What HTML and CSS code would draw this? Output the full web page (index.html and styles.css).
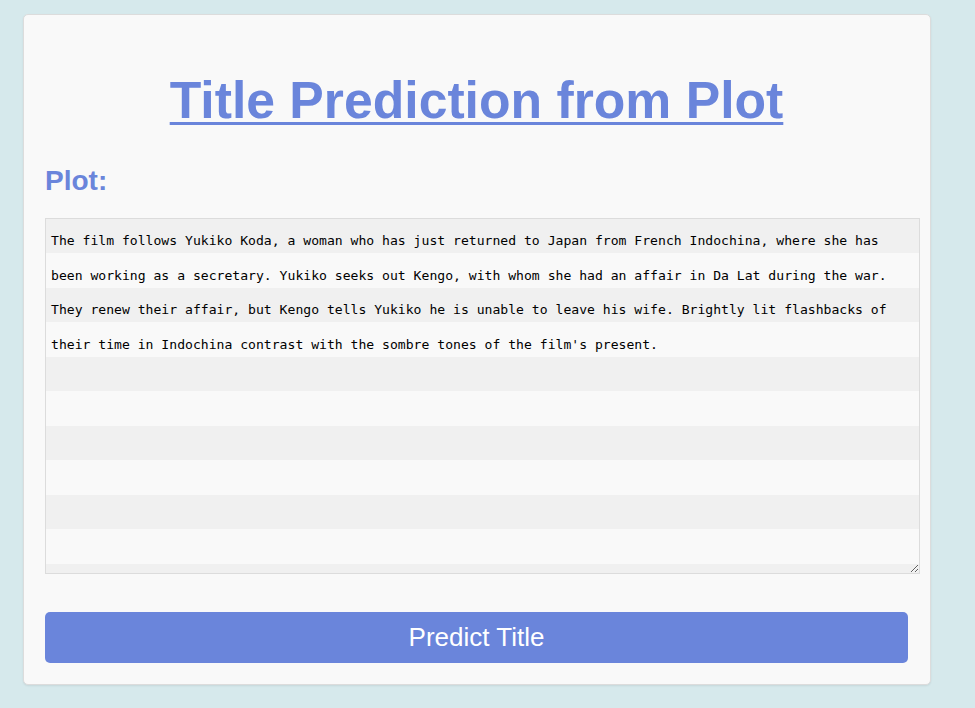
FILE: index.html
```html
<!DOCTYPE html>
<html lang="en">
<head>
<meta charset="utf-8">
<title>Title Prediction from Plot</title>
<link rel="stylesheet" href="styles.css">
</head>
<body>
<div class="card">
  <h1 class="title"><a href="#" class="title-link">Title Prediction from Plot</a></h1>
  <h2 class="label">Plot:</h2>
  <textarea class="plot" spellcheck="false">The film follows Yukiko Koda, a woman who has just returned to Japan from French Indochina, where she has been working as a secretary. Yukiko seeks out Kengo, with whom she had an affair in Da Lat during the war. They renew their affair, but Kengo tells Yukiko he is unable to leave his wife. Brightly lit flashbacks of their time in Indochina contrast with the sombre tones of the film's present.</textarea>
  <button class="predict" type="button">Predict Title</button>
</div>
</body>
</html>
```

FILE: styles.css
```css
html, body {
  margin: 0;
  padding: 0;
}

body {
  background: #d6e9ec;
  font-family: "Liberation Sans", Arial, sans-serif;
  padding: 14px 0 0 23px;
  height: 708px;
  box-sizing: border-box;
  overflow: hidden;
}

.card {
  width: 908px;
  box-sizing: border-box;
  background: #f9f9f9;
  border: 1px solid #dcdcdc;
  border-radius: 5px;
  box-shadow: 0 1px 2px rgba(0, 0, 0, 0.08);
  padding: 20px 22px 21px 21px;
}

.title {
  margin: 36px 0 0;
  text-align: center;
  font-size: 51.7px;
  font-weight: bold;
  line-height: 58px;
}

.title-link {
  color: #6a85db;
  text-decoration: underline;
  text-decoration-thickness: 3px;
  text-underline-offset: 4px;
}

.label {
  margin: 36px 0 0;
  color: #6a85db;
  font-size: 28px;
  font-weight: bold;
  line-height: 31px;
}

.plot {
  display: block;
  margin: 22px 0 0;
  width: 100%;
  height: 344px;
  box-sizing: content-box;
  padding: 5px;
  border: 1px solid #dcdcdc;
  border-radius: 0;
  font-family: "DejaVu Sans Mono", "Liberation Mono", monospace;
  font-size: 13.1px;
  line-height: 34.5px;
  color: #000;
  background: repeating-linear-gradient(#f0f0f0 0, #f0f0f0 34.5px, #f9f9f9 34.5px, #f9f9f9 69px);
  outline: none;
  overflow: hidden;
}

.predict {
  display: block;
  width: 100%;
  margin: 38px 0 0;
  height: 51px;
  border: none;
  border-radius: 5px;
  background: #6a85db;
  color: #fff;
  font-family: "Liberation Sans", Arial, sans-serif;
  font-size: 26px;
  cursor: pointer;
}
```
